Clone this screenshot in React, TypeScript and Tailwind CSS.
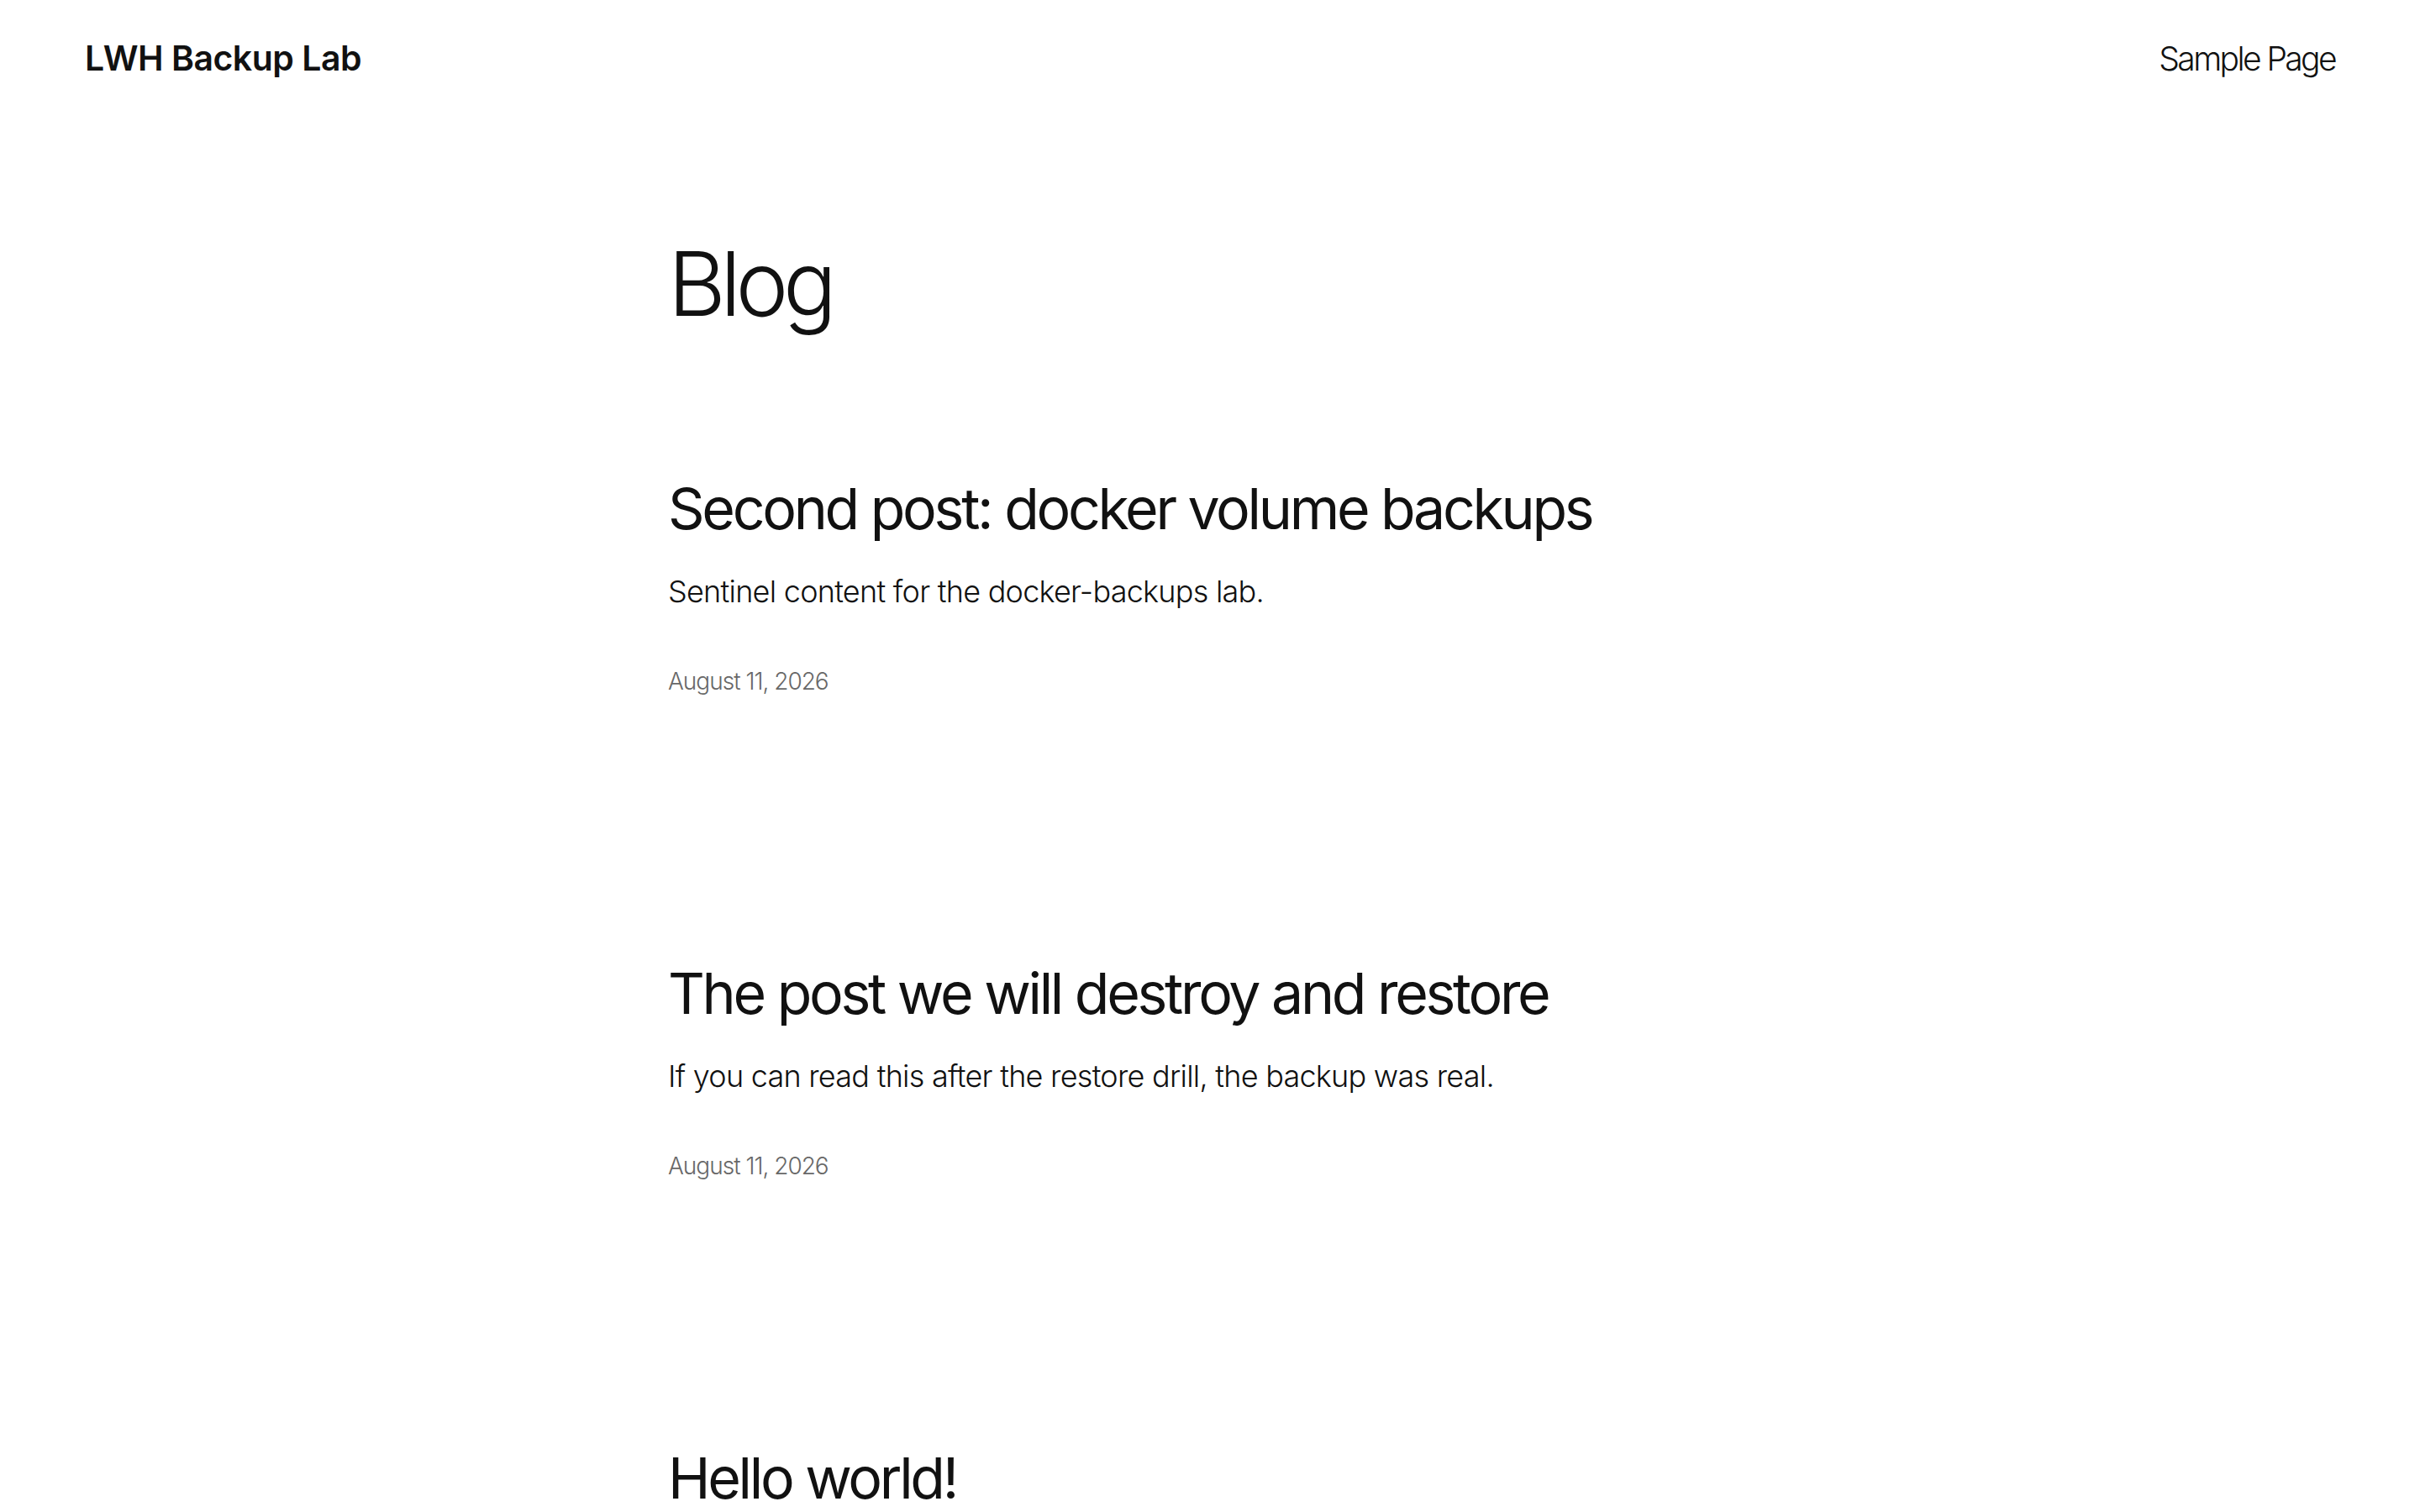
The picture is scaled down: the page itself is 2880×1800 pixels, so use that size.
import React from 'react';

type Post = { title: string; excerpt?: string; date?: string };

const posts: Post[] = [
  {
    title: 'Second post: docker volume backups',
    excerpt: 'Sentinel content for the docker-backups lab.',
    date: 'August 11, 2026',
  },
  {
    title: 'The post we will destroy and restore',
    excerpt: 'If you can read this after the restore drill, the backup was real.',
    date: 'August 11, 2026',
  },
  { title: 'Hello world!' },
];

const App: React.FC = () => {
  return (
    <div className="min-h-screen bg-white text-[#111111] font-['Inter',sans-serif] overflow-hidden">
      {/* Header */}
      <header className="flex h-[140px] items-center justify-between px-[101px]">
        <a className="text-[41px] font-semibold tracking-[-0.5px]">LWH Backup Lab</a>
        <nav>
          <a className="text-[39px] font-light tracking-[-2.6px]">Sample Page</a>
        </nav>
      </header>

      {/* Main */}
      <main className="mx-auto w-[1290px]">
        <h1 className="mt-[145px] text-[106px] font-light leading-none tracking-[-6.5px]">Blog</h1>

        <div className="mt-[180px] flex flex-col gap-[323px]">
          {posts.map((p) => (
            <article key={p.title}>
              <h2 className="text-[68px] font-normal leading-none tracking-[-3.3px]">{p.title}</h2>
              {p.excerpt && (
                <p className="mt-[47px] text-[36px] font-light leading-none tracking-[-0.75px]">{p.excerpt}</p>
              )}
              {p.date && (
                <div className="mt-[75px] text-[28px] font-light leading-none tracking-[-1px] text-[#686868]">{p.date}</div>
              )}
            </article>
          ))}
        </div>
      </main>
    </div>
  );
};

export default App;
